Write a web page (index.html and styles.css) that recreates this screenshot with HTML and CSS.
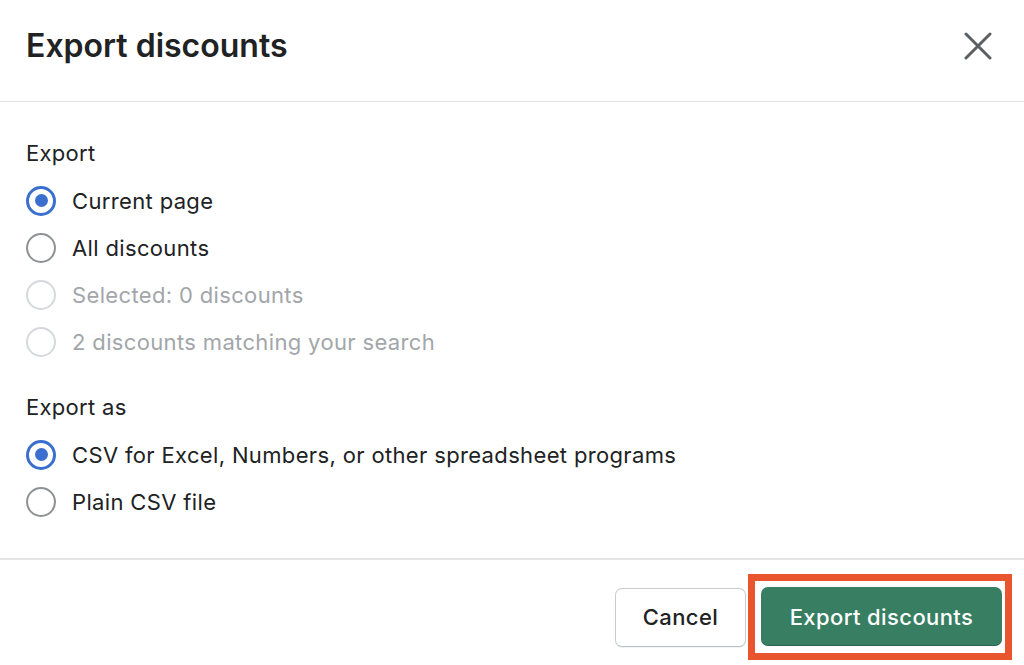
FILE: index.html
```html
<!DOCTYPE html>
<html lang="en">
<head>
    <meta charset="UTF-8">
    <meta name="viewport" content="width=device-width, initial-scale=1.0">
    <title>Export discounts</title>
    <link rel="stylesheet" href="styles.css">
</head>
<body>
    <div class="modal">
        <div class="modal-header">
            <h1>Export discounts</h1>
            <button class="close" type="button" aria-label="Close">
                <svg width="28" height="28" viewBox="0 0 28 28">
                    <path d="M2 2 L26 26 M26 2 L2 26" stroke="#5c5f62" stroke-width="3" stroke-linecap="round" fill="none"/>
                </svg>
            </button>
        </div>

        <div class="modal-body">
            <div class="group">
                <p class="group-label">Export</p>
                <label class="option"><span class="radio checked"></span>Current page</label>
                <label class="option"><span class="radio"></span>All discounts</label>
                <label class="option disabled"><span class="radio"></span>Selected: 0 discounts</label>
                <label class="option disabled"><span class="radio"></span>2 discounts matching your search</label>
            </div>

            <div class="group">
                <p class="group-label">Export as</p>
                <label class="option"><span class="radio checked"></span>CSV for Excel, Numbers, or other spreadsheet programs</label>
                <label class="option"><span class="radio"></span>Plain CSV file</label>
            </div>
        </div>

        <div class="modal-footer">
            <button class="btn" type="button">Cancel</button>
            <!-- highlight around the primary action -->
            <span class="highlight">
                <button class="btn btn-primary" type="button">Export discounts</button>
            </span>
        </div>
    </div>
</body>
</html>
```

FILE: styles.css
```css
body {
    margin: 0;
    padding: 0;
    background-color: #fff;
    color: #202223;
    font-family: Inter, "Noto Sans", sans-serif;
}

.modal {
    width: 1024px;
    height: 665px;
    background-color: #fff;
}

.modal-header {
    height: 91px;
    display: flex;
    align-items: center;
    justify-content: space-between;
    padding: 0 32px 10px 26px;
    border-bottom: 1px solid #e1e3e5;
}

h1 {
    margin: 0;
    font-size: 32px;
    line-height: 1;
    font-weight: 600;
    color: #202223;
}

.close {
    border: none;
    background: none;
    padding: 0;
    width: 28px;
    height: 28px;
    cursor: pointer;
}

.modal-body {
    padding: 39px 26px 33px;
}

.group + .group {
    margin-top: 30px;
}

.group-label {
    margin: 0 0 12px;
    font-size: 22px;
    letter-spacing: 0.3px;
    line-height: 24px;
}

.option {
    display: flex;
    align-items: center;
    gap: 16px;
    height: 47px;
    font-size: 22px;
    letter-spacing: 0.35px;
    cursor: pointer;
}

.option.disabled {
    color: #a2a6aa;
    cursor: default;
}

.radio {
    box-sizing: border-box;
    flex: none;
    width: 30px;
    height: 30px;
    border: 2.5px solid #8c9196;
    border-radius: 50%;
    display: flex;
    align-items: center;
    justify-content: center;
}

.radio.checked {
    border: 3px solid #3a6fcf;
}

.radio.checked::after {
    content: "";
    width: 13px;
    height: 13px;
    border-radius: 50%;
    background-color: #3a6fcf;
}

.option.disabled .radio {
    border-color: #d6d8db;
}

.modal-footer {
    display: flex;
    justify-content: flex-end;
    align-items: center;
    gap: 2px;
    padding: 14px 12px 0;
    border-top: 2px solid #e4e5e7;
}

.btn {
    width: 131px;
    height: 59px;
    padding: 0;
    font-family: Inter, "Noto Sans", sans-serif;
    font-size: 22px;
    font-weight: 500;
    letter-spacing: 0.4px;
    color: #202223;
    background-color: #fff;
    border: 1px solid #c9cccf;
    border-bottom-color: #babfc3;
    border-radius: 7px;
    box-shadow: 0 1px 0 rgba(0, 0, 0, 0.05);
    cursor: pointer;
}

.btn-primary {
    width: 241px;
    color: #fff;
    background-color: #377e62;
    border: none;
    box-shadow: inset 0 -1px 0 rgba(0, 0, 0, 0.2);
}

.highlight {
    display: block;
    border: 7px solid #e9552d;
    padding: 6px 3px 7px 6px;
}

.highlight .btn-primary {
    display: block;
}
```
